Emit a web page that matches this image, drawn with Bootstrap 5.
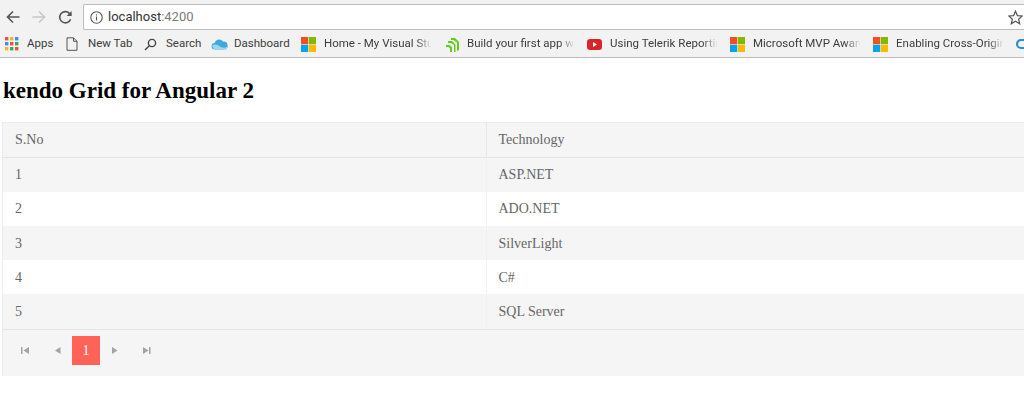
<!DOCTYPE html>
<html lang="en">
<head>
<meta charset="utf-8">
<title>kendo Grid</title>
<link rel="stylesheet" href="https://cdn.jsdelivr.net/npm/bootstrap@5.3.0/dist/css/bootstrap.min.css">
<style>
html,body{height:408px;overflow:hidden;background:#fff}
body{font-family:"Liberation Serif",serif;width:1024px}
.chrome-bar{background:#f2f2f2;height:58px;border-bottom:1px solid #bdbdbd;overflow:hidden;font-family:Roboto,"Open Sans",sans-serif}
.nav-line{height:31px;padding-top:4px}
.nav-btn{width:27px;height:26px;flex:none;display:flex;align-items:center;justify-content:center}
.nav-btn svg{display:block}
.first-btn{width:25px}
.url-box{background:#fff;border:1px solid #bcbcbc;border-right:0;border-radius:2px 0 0 2px;height:26px;width:941px;margin-left:4px;font-size:13px;color:#333;padding-left:6px;flex:none}
.url-port{color:#7a7a7a}
.url-host{margin-left:5px}
.star{margin-left:auto;margin-right:1px}
.marks{height:26px;font-size:11.5px;color:#3c3c3c;padding-left:5px;white-space:nowrap}
.mark-item{display:flex;align-items:center;flex:none;gap:8px}
.w-apps{width:61px}
.w-doc{width:78px;gap:10px}
.w-search{width:67px;gap:9px}
.w-dash{width:90px;gap:6px}
.w-home{width:144px}
.w-green{width:142px;gap:7px}
.w-rest{width:143px}
.mark-item svg{flex:none;display:block}
.fade-text{display:block;width:110px;-webkit-mask-image:linear-gradient(to right,#000 84%,transparent 98%);mask-image:linear-gradient(to right,#000 84%,transparent 98%)}
.page-title{font-family:"Liberation Serif",serif;font-weight:700;font-size:23px;line-height:28px;color:#000;margin:19px 0 17px 3px}
.grid-wrap{margin-left:2px;width:1040px;background:#f5f5f5;color:#666;font-size:14px;border:1px solid #ededed;border-right:0;border-bottom:0}
.grid-table{margin:0;table-layout:fixed;width:100%;--bs-table-bg:transparent;color:#666}
.grid-table td,.grid-table th{font-weight:400;padding:0 12px;height:34.3px;vertical-align:middle;border:0;color:#666;box-shadow:none;background:transparent}
.grid-table th{border-bottom:1px solid #e4e4e4}
.grid-table th:first-child{width:483px;border-right:1px solid #e6e6e6}
.grid-table td:first-child{width:483px;border-right:1px solid #f1f1f1}
.row-odd{background:#f5f5f5}
.row-even{background:#fff}
.pager-row{height:47px;border-top:1px solid #e4e4e4;padding:0 0 4px 8px;background:#f5f5f5}
.pg-btn{width:29px;height:29px;display:flex;align-items:center;justify-content:center;flex:none}
.pg-gap{margin-left:3px}
.pg-active{background:#ff6358;color:#fff;font-size:14px;width:28px}
</style>
</head>
<body>
<div class="chrome-bar">
  <div class="nav-line d-flex">
    <div class="nav-btn first-btn"><svg width="14" height="14" viewBox="0 0 14 14" fill="none" stroke="#555" stroke-width="1.6"><path d="M13.500 7H1.500M7 1.500 1.500 7 7 12.500"/></svg></div>
    <div class="nav-btn"><svg width="14" height="14" viewBox="0 0 14 14" fill="none" stroke="#c8c8c8" stroke-width="1.6"><path d="M.5 7h12M7 1.500 12.500 7 7 12.500"/></svg></div>
    <div class="nav-btn"><svg width="15" height="15" viewBox="0 0 15 15" fill="none" stroke="#555" stroke-width="1.6"><path d="M12.600 9.200A5.600 5.600 0 1 1 11.400 3.400L13 5"/><path d="M13.600 1v5h-5" fill="#555" stroke="none"/></svg></div>
    <div class="url-box d-flex align-items-center">
      <svg width="13" height="13" viewBox="0 0 13 13" fill="none" stroke="#555" stroke-width="1.1"><circle cx="6.500" cy="6.500" r="5.700"/><path d="M6.500 5.600v4M6.500 3.200v1.200"/></svg>
      <span class="url-host">localhost<span class="url-port">:4200</span></span>
      <svg class="star" width="15" height="15" viewBox="0 0 15 15" fill="none" stroke="#555" stroke-width="1.2"><path d="M7.500 1.200 9.400 5.600l4.800.4-3.600 3.200 1.100 4.600-4.200-2.500-4.200 2.500 1.100-4.600L.8 6l4.800-.4z"/></svg>
    </div>
  </div>
  <div class="marks d-flex align-items-center">
    <div class="mark-item w-apps"><svg width="14" height="14" viewBox="0 0 14 14"><rect width="3.400" height="3.400" fill="#e8543f"/><rect x="5" width="3.400" height="3.400" fill="#f2b33d"/><rect x="10" width="3.400" height="3.400" fill="#4a8af4"/><rect y="5" width="3.400" height="3.400" fill="#4a8af4"/><rect x="5" y="5" width="3.400" height="3.400" fill="#e8543f"/><rect x="10" y="5" width="3.400" height="3.400" fill="#3aa757"/><rect y="10" width="3.400" height="3.400" fill="#f2b33d"/><rect x="5" y="10" width="3.400" height="3.400" fill="#3aa757"/><rect x="10" y="10" width="3.400" height="3.400" fill="#e8543f"/></svg><span>Apps</span></div>
    <div class="mark-item w-doc"><svg width="12" height="14" viewBox="0 0 12 14" fill="none" stroke="#555"><path d="M1 .8h6.500L11 4.300v9H1zM7.500.8v3.500H11"/></svg><span>New Tab</span></div>
    <div class="mark-item w-search"><svg width="13" height="13" viewBox="0 0 13 13" fill="none" stroke="#444" stroke-width="1.4"><circle cx="8" cy="5" r="3.600"/><path d="M5.300 7.700 1 12"/></svg><span>Search</span></div>
    <div class="mark-item w-dash"><svg width="17" height="12" viewBox="0 0 17 12"><path d="M4 11.500a3.200 3.200 0 0 1-.4-6.400A4.600 4.600 0 0 1 12 3.600a3.500 3.500 0 0 1 1.300 7.900z" fill="#3fa9dc"/><path d="M1 7.500c3-2 6-.5 8 1s5 1.500 7 .5v2.500H3z" fill="#9fd6ee"/></svg><span>Dashboard</span></div>
    <div class="mark-item w-home"><svg width="15" height="15" viewBox="0 0 15 15"><rect width="7.200" height="7.200" fill="#f25022"/><rect x="7.800" width="7.200" height="7.200" fill="#7fba00"/><rect y="7.800" width="7.200" height="7.200" fill="#00a4ef"/><rect x="7.800" y="7.800" width="7.200" height="7.200" fill="#ffb900"/></svg><span class="fade-text">Home - My Visual Stu</span></div>
    <div class="mark-item w-green"><svg width="15" height="15" viewBox="0 0 15 15" fill="#5fce1f"><path d="M6 1h4l4 4v8l-2 1V5.500L8.500 3H6zM3 4h4l3.500 3.500V15H9V8L6 6H3zM1 8h3l3 2v5H5v-4L3 10H1z"/></svg><span class="fade-text">Build your first app w</span></div>
    <div class="mark-item w-rest"><svg width="15" height="11" viewBox="0 0 15 11"><rect width="15" height="11" rx="3" fill="#d9252a"/><path d="M6 3v5l4-2.500z" fill="#fff"/></svg><span class="fade-text">Using Telerik Reportin</span></div>
    <div class="mark-item w-rest"><svg width="15" height="15" viewBox="0 0 15 15"><rect width="7.200" height="7.200" fill="#f25022"/><rect x="7.800" width="7.200" height="7.200" fill="#7fba00"/><rect y="7.800" width="7.200" height="7.200" fill="#00a4ef"/><rect x="7.800" y="7.800" width="7.200" height="7.200" fill="#ffb900"/></svg><span class="fade-text">Microsoft MVP Award</span></div>
    <div class="mark-item w-rest"><svg width="15" height="15" viewBox="0 0 15 15"><rect width="7.200" height="7.200" fill="#f25022"/><rect x="7.800" width="7.200" height="7.200" fill="#7fba00"/><rect y="7.800" width="7.200" height="7.200" fill="#00a4ef"/><rect x="7.800" y="7.800" width="7.200" height="7.200" fill="#ffb900"/></svg><span class="fade-text">Enabling Cross-Origin</span></div>
    <div class="mark-item"><svg width="8" height="15" viewBox="0 0 8 15" fill="none" stroke="#2a8fd8" stroke-width="2.200"><path d="M8 3H5a4 4 0 0 0 0 8h3"/></svg></div>
  </div>
</div>
<h1 class="page-title">kendo Grid for Angular 2</h1>
<div class="grid-wrap">
  <table class="table grid-table">
    <thead><tr><th>S.No</th><th>Technology</th></tr></thead>
    <tbody>
      <tr class="row-odd"><td>1</td><td>ASP.NET</td></tr>
      <tr class="row-even"><td>2</td><td>ADO.NET</td></tr>
      <tr class="row-odd"><td>3</td><td>SilverLight</td></tr>
      <tr class="row-even"><td>4</td><td>C#</td></tr>
      <tr class="row-odd"><td>5</td><td>SQL Server</td></tr>
    </tbody>
  </table>
  <div class="pager-row d-flex align-items-center">
    <div class="pg-btn"><svg width="9" height="9" viewBox="0 0 9 9" fill="#a3a3a3"><path d="M0 1h1.500v7H0zM8 1v7L2.500 4.500z"/></svg></div>
    <div class="pg-btn pg-gap"><svg width="7" height="9" viewBox="0 0 7 9" fill="#a3a3a3"><path d="M6.500 1v7L1 4.500z"/></svg></div>
    <div class="pg-btn pg-active">1</div>
    <div class="pg-btn"><svg width="7" height="9" viewBox="0 0 7 9" fill="#a3a3a3"><path d="M1 1v7l5.500-3.500z"/></svg></div>
    <div class="pg-btn pg-gap"><svg width="9" height="9" viewBox="0 0 9 9" fill="#a3a3a3"><path d="M1 1v7l5.500-3.500zM7 1h1.500v7H7z"/></svg></div>
  </div>
</div>
<script src="https://cdn.jsdelivr.net/npm/bootstrap@5.3.0/dist/js/bootstrap.bundle.min.js"></script>
</body>
</html>
